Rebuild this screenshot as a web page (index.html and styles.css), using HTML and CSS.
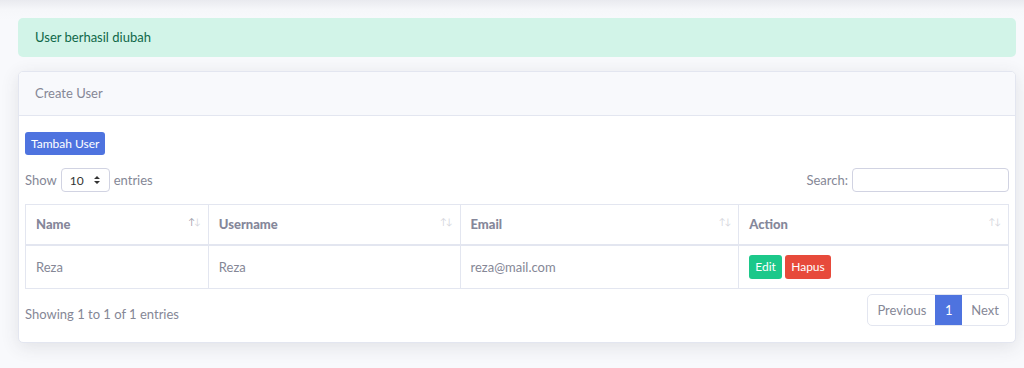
FILE: index.html
```html
<!DOCTYPE html>
<html lang="id">
<head>
<meta charset="utf-8">
<title>Users</title>
<link rel="stylesheet" href="styles.css">
</head>
<body>
<div class="page">
  <div class="alert">User berhasil diubah</div>
  <div class="card">
    <div class="card-header">Create User</div>
    <div class="card-body">
      <div class="actions"><span class="btn btn-primary">Tambah User</span></div>
      <div class="dt-top">
        <label class="dt-length">Show
          <span class="select">10<svg width="8" height="10" viewBox="0 0 8 10"><path d="M4 1 L7 4 H1 Z M4 9 L7 6 H1 Z" fill="#333"/></svg></span>
          entries</label>
        <label class="dt-search">Search: <span class="input"></span></label>
      </div>
      <table class="table">
        <thead>
          <tr>
            <th class="c1">Name<span class="sort"><span class="dark">↑</span>↓</span></th>
            <th class="c2">Username<span class="sort">↑↓</span></th>
            <th class="c3">Email<span class="sort">↑↓</span></th>
            <th class="c4">Action<span class="sort">↑↓</span></th>
          </tr>
        </thead>
        <tbody>
          <tr>
            <td>Reza</td>
            <td>Reza</td>
            <td>reza@mail.com</td>
            <td><span class="btn btn-success">Edit</span> <span class="btn btn-danger">Hapus</span></td>
          </tr>
        </tbody>
      </table>
      <div class="dt-bottom">
        <div class="info">Showing 1 to 1 of 1 entries</div>
        <div class="pagination">
          <span class="page-link">Previous</span>
          <span class="page-link active">1</span>
          <span class="page-link">Next</span>
        </div>
      </div>
    </div>
  </div>
</div>
</body>
</html>
```
FILE: styles.css
```css
* { box-sizing: border-box; }
html, body { margin: 0; padding: 0; }
body {
  width: 1024px;
  height: 368px;
  overflow: hidden;
  background: linear-gradient(to bottom, #e9eaef 0px, #f6f7fa 10px, #f8f9fc 20px);
  font-family: "Lato", "Open Sans", sans-serif;
  color: #858796;
}
.page {
  padding: 18px 8px 0 18px;
}
.alert {
  background: #d2f4e8;
  color: #0f6848;
  border-radius: 5px;
  font-size: 13px;
  height: 39px;
  line-height: 39px;
  padding: 0 17px;
  margin-bottom: 14px;
}
.card {
  background: #fff;
  border: 1px solid #e3e6f0;
  border-radius: 5px;
  box-shadow: 0 4px 18px rgba(58, 59, 69, 0.12);
  overflow: hidden;
}
.card-header {
  background: #f8f9fc;
  border-bottom: 1px solid #e3e6f0;
  height: 44px;
  line-height: 43px;
  padding: 0 16px;
  font-size: 13px;
  color: #858796;
}
.card-body {
  padding: 16px 6px 16px 6px;
}
.actions {
  display: flex;
  height: 23px;
}
.btn {
  display: inline-block;
  white-space: nowrap;
  font-size: 12px;
  color: #fff;
  border-radius: 3px;
  line-height: 23px;
  height: 23px;
  padding: 0 6px;
  vertical-align: top;
}
.btn-primary { background: #4e73df; }
.btn-success { background: #1cc88a; height: 24px; line-height: 24px; padding: 0 6px; }
.btn-danger { background: #e74a3b; height: 24px; line-height: 24px; padding: 0 6px; }
.dt-top {
  display: flex;
  justify-content: space-between;
  align-items: center;
  margin-top: 13px;
  height: 24px;
  font-size: 13px;
}
.dt-length, .dt-search {
  display: flex;
  align-items: center;
  gap: 4px;
}
.select {
  display: inline-flex;
  align-items: center;
  justify-content: space-between;
  width: 49px;
  height: 24px;
  border: 1px solid #d1d3e2;
  border-radius: 4px;
  padding: 0 8px 0 8px;
  color: #333;
  font-size: 12px;
}
.input {
  display: inline-block;
  width: 157px;
  height: 24px;
  border: 1px solid #d1d3e2;
  border-radius: 4px;
}
.table {
  width: 984px;
  border-collapse: collapse;
  margin-top: 12px;
  font-size: 13px;
}
.table th, .table td {
  border: 1px solid #e3e6f0;
  text-align: left;
  padding: 0 10px;
}
.table th {
  position: relative;
  height: 40px;
  font-weight: 900;
  color: #85879a;
  border-bottom: 2px solid #e3e6f0;
}
.table td { height: 44px; }
.c1 { width: 183px; }
.c2 { width: 252px; }
.c3 { width: 279px; }
.c4 { width: 270px; }
.sort {
  position: absolute;
  right: 8px;
  top: 11px;
  font-size: 9px;
  font-weight: 400;
  color: #d4d5dc;
  letter-spacing: -1px;
}
.sort .dark { color: #9a9ba8; }
.dt-bottom {
  display: flex;
  justify-content: space-between;
  align-items: center;
  margin-top: 5px;
  font-size: 13px;
}
.info { padding-top: 8px; }
.pagination {
  display: flex;
  border: 1px solid #e3e6f0;
  border-radius: 5px;
  overflow: hidden;
}
.page-link {
  height: 30px;
  line-height: 30px;
  padding: 0 9px;
  font-size: 13px;
  color: #858796;
}
.page-link.active {
  background: #4e73df;
  color: #fff;
  width: 27px;
  padding: 0;
  text-align: center;
}
```
